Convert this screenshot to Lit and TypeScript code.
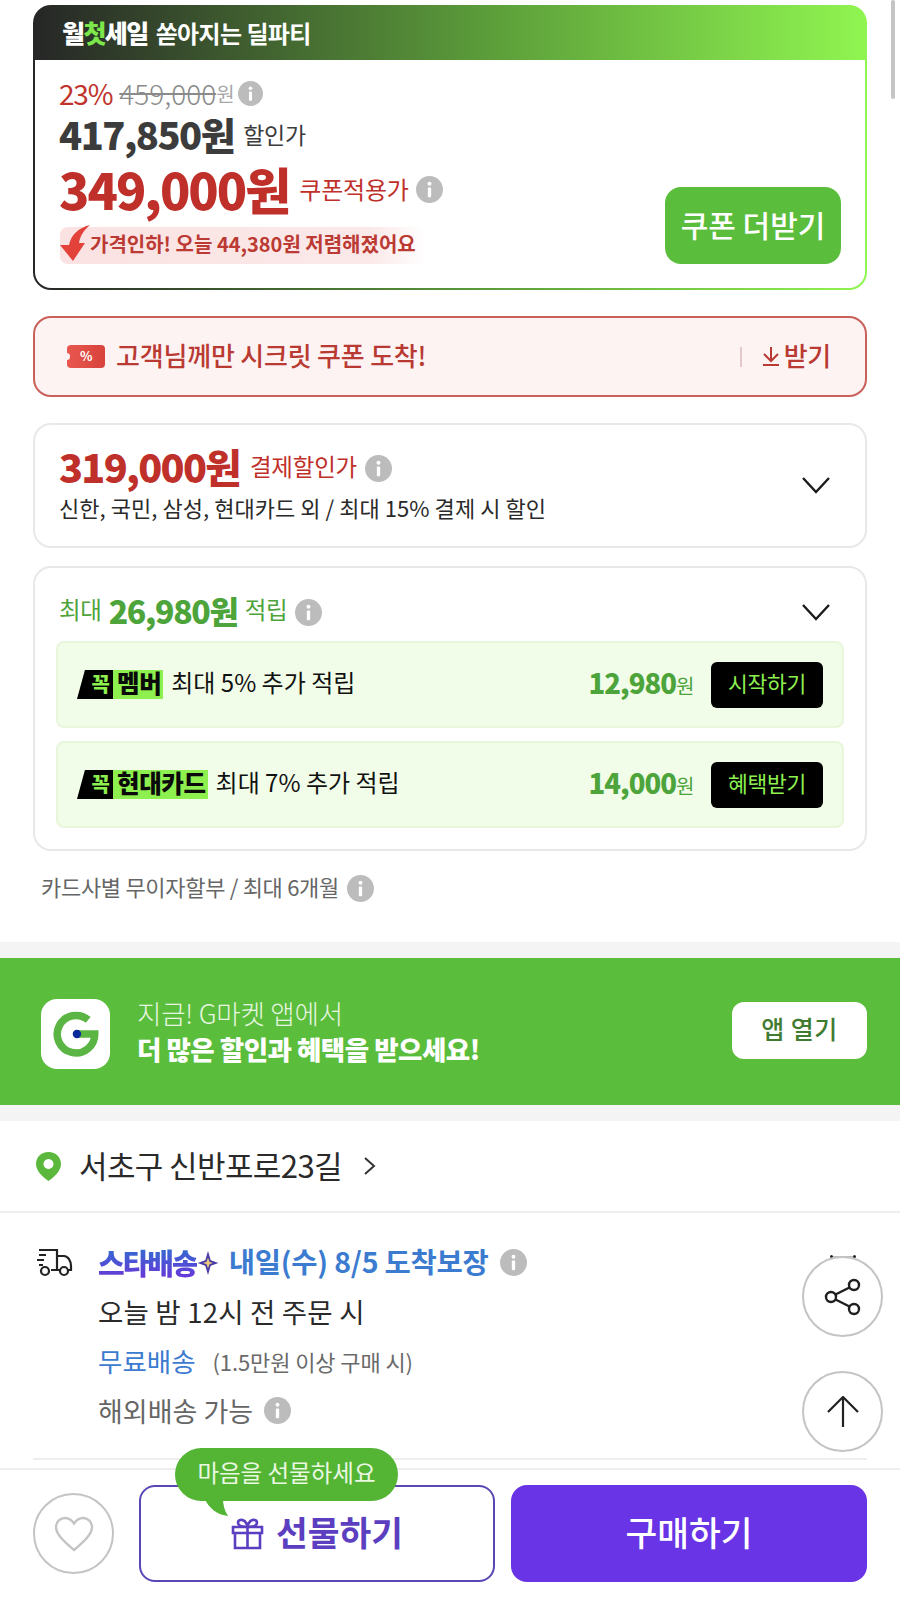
import { LitElement, html, css } from "lit";
import { customElement } from "lit/decorators.js";

const info = (s = 26) => html`<svg class="info" width=${s} height=${s} viewBox="0 0 26 26"><circle cx="13" cy="13" r="13" fill="#bcbcbc"/><circle cx="13" cy="7.5" r="1.9" fill="#fff"/><rect x="11.4" y="11" width="3.2" height="9.5" rx="1" fill="#fff"/></svg>`;
const chevron = html`<svg width="30" height="18" viewBox="0 0 30 18" fill="none" stroke="#1c1c1c" stroke-width="2.4"><path d="M2 2 L15 16 L28 2"/></svg>`;

@customElement("app-root")
export class AppRoot extends LitElement {
  static styles = css`
    :host { display: block; width: 900px; font-family: "Noto Sans CJK KR", "Noto Sans", sans-serif; color: #222; letter-spacing: -0.3px; }
    * { box-sizing: border-box; }
    svg { display: block; flex: none; }
    .page { position: relative; width: 900px; height: 1603px; background: #fff; padding-top: 5px; overflow: hidden; line-height: 1.15; }
    .scroll { position: absolute; right: 5px; top: 0; width: 4px; height: 99px; border-radius: 2px; background: #c4c4c4; }
    .sect { margin: 0 33px; }

    .deal { height: 285px; border-radius: 18px; padding: 0 2px 2px; background: linear-gradient(90deg, #262626 0%, #5c9e3a 55%, #90f550 100%); display: flex; flex-direction: column; }
    .deal-head { height: 55px; flex: none; display: flex; align-items: center; gap: 8px; padding-left: 27px; color: #fff; font-weight: 700; font-size: 24px; letter-spacing: -0.6px; }
    .deal-head b { font-size: 25px; font-weight: 900; letter-spacing: -1.6px; }
    .deal-head i { font-style: normal; color: #7ce64a; }
    .deal-body { flex: 1; background: #fff; border-radius: 0 0 16px 16px; padding: 16px 24px 24px 24px; display: flex; justify-content: space-between; align-items: flex-end; }
    .prices { display: flex; flex-direction: column; }
    .r1 { height: 34px; display: flex; align-items: center; font-size: 28px; color: #c0332b; letter-spacing: -1.2px; }
    .r1 s { color: #8a8a8a; font-size: 28px; margin-left: 7px; letter-spacing: 0; font-weight: 300; }
    .r1 span { color: #a8a8a8; font-size: 20px; }
    .r1 .info { margin-left: 5px; }
    .r2 { height: 48px; display: flex; align-items: center; color: #3c3c3c; }
    .r2 b { font-size: 38px; font-weight: 800; letter-spacing: -1.5px; }
    .r2 span { font-size: 23px; margin-left: 9px; letter-spacing: -0.2px; }
    .r3 { height: 62px; display: flex; align-items: center; color: #c0302a; }
    .r3 b { font-size: 50px; font-weight: 800; letter-spacing: -2px; }
    .r3 span { font-size: 24px; margin: 0 7px 0 10px; letter-spacing: -0.2px; }
    .drop { margin-top: 7px; height: 37px; width: 366px; display: flex; align-items: center; margin-left: 1px; background: linear-gradient(90deg, #fbe2e2 0%, #fbe9e9 85%, #fff 100%); border-radius: 8px; color: #bb3a33; font-size: 20px; font-weight: 700; letter-spacing: 0; }
    .drop svg { margin: -4px 0 0 0; }
    .drop span { padding-bottom: 4px; }
    .more { width: 176px; height: 77px; border-radius: 16px; background: #5bbd3c; color: #fff; font-size: 30px; font-weight: 500; display: flex; align-items: center; justify-content: center; letter-spacing: 0; padding-bottom: 3px; }

    .coupon { margin-top: 26px; height: 81px; border: 2px solid #c9605a; border-radius: 18px; background: #fdf3f3; display: flex; align-items: center; padding: 0 34px 0 32px; color: #b93a33; font-size: 26px; font-weight: 500; }
    .coupon .txt { margin-left: 11px; flex: 1; letter-spacing: -0.2px; padding-bottom: 4px; }
    .ticket { position: relative; width: 38px; height: 23px; flex: none; border-radius: 4px; background: linear-gradient(90deg, #e8574f, #d8433c); color: #fff; font-size: 13px; font-weight: 700; display: flex; align-items: center; justify-content: center; }
    .ticket::before { content: ""; position: absolute; left: -3px; top: 8px; width: 6px; height: 7px; border-radius: 50%; background: #fdf3f3; }
    .sep { width: 2px; height: 20px; background: #e0c9c8; margin-right: 20px; }
    .get { display: flex; align-items: center; gap: 4px; }
    .get span { padding-bottom: 4px; }

    .box { border: 2px solid #e8e8e8; border-radius: 18px; background: #fff; }
    .pay { margin-top: 26px; height: 125px; padding: 22px 34px 0 24px; position: relative; display: flex; justify-content: space-between; }
    .pay-l { display: flex; flex-direction: column; }
    .pay-top { display: flex; align-items: center; height: 42px; color: #c0302a; }
    .pay-top b { font-size: 39.5px; font-weight: 800; letter-spacing: -1.7px; padding-bottom: 4px; }
    .pay-top span { font-size: 23.5px; margin: 0 8px 0 10px; padding-bottom: 3px; letter-spacing: -0.2px; }
    .pay-sub { font-size: 22px; height: 34px; line-height: 32px; color: #2a2a2a; margin-top: 2px; letter-spacing: 0.05px; }
    .pay .chev, .rw-head .chev { align-self: center; }
    .pay .chev { margin-top: -24px; }

    .reward { margin-top: 18px; height: 285px; padding: 0 21px; }
    .rw-head { height: 73px; display: flex; align-items: center; padding: 15px 13px 0 3px; color: #4da43b; font-size: 23.5px; }
    .rw-head b { font-size: 32px; font-weight: 800; letter-spacing: -1.3px; margin: 0 7px; padding-bottom: 4px; }
    .rw-head span { padding-bottom: 4px; }
    .rw-head .info { margin-left: 8px; }
    .rw-head .chev { margin-left: auto; }
    .rw { height: 87px; border: 2px solid #e8f6dc; border-radius: 8px; background: #f1fde8; display: flex; align-items: flex-start; padding: 19px 19px 0 19px; }
    .rw + .rw { margin-top: 13px; }
    .badge { display: flex; height: 29px; margin-top: 8px; flex: none; }
    .badge .k { width: 36px; background: #000; clip-path: polygon(22% 0, 100% 0, 100% 100%, 0 100%); color: #8ef04f; font-size: 20px; font-weight: 900; display: flex; align-items: center; justify-content: flex-end; padding: 0 3px 2px 0; letter-spacing: 0; }
    .badge .n { background: #8ef04f; color: #0a0a0a; font-size: 24.5px; font-weight: 900; padding: 0 2px 2px 4px; display: flex; align-items: center; letter-spacing: -0.4px; }
    .rw-t { font-size: 24px; margin: 5px 0 0 8px; height: 30px; line-height: 30px; color: #111; letter-spacing: 0; }
    .amt { margin: 5px 17px 0 auto; height: 30px; line-height: 30px; color: #4da43b; font-size: 20px; }
    .amt b { font-size: 27.5px; font-weight: 800; letter-spacing: -1px; }
    .btn-k { width: 112px; height: 46px; border-radius: 6px; background: #000; color: #8ef04f; font-size: 21.5px; display: flex; align-items: center; justify-content: center; flex: none; padding-bottom: 3px; }
    .install { margin: 20px 33px 0 41px; height: 34px; display: flex; align-items: center; font-size: 22px; color: #666; gap: 8px; }
    .install span { padding-bottom: 2px; }

    .band { height: 16px; background: #f4f4f4; }
    .band.a { margin-top: 37px; }
    .app { height: 147px; background: #5bbd3c; display: flex; align-items: center; padding: 0 33px 0 41px; color: #fff; }
    .g { width: 69px; height: 70px; border-radius: 16px; background: #fff; margin-top: 4px; display: flex; align-items: center; justify-content: center; flex: none; }
    .app-t { margin-left: 27px; flex: 1; padding-bottom: 2px; }
    .app-t div { height: 36px; line-height: 36px; font-size: 26.5px; font-weight: 300; color: #e7f6e0; letter-spacing: -0.2px; }
    .app-t b { display: block; height: 36px; line-height: 36px; font-size: 26.5px; font-weight: 800; letter-spacing: -0.5px; }
    .open { width: 135px; height: 57px; border-radius: 12px; background: #fff; color: #3f7c31; font-size: 25px; font-weight: 500; display: flex; align-items: center; justify-content: center; margin-top: -3px; letter-spacing: 0.5px; padding-bottom: 3px; }

    .loc { height: 92px; border-bottom: 2px solid #eee; display: flex; align-items: center; padding-left: 36px; font-size: 31px; color: #2a2a2a; }
    .loc span { margin: 0 21px 0 18px; letter-spacing: -0.6px; padding-bottom: 2px; }

    .dlv { display: grid; grid-template-columns: 62px 1fr; grid-auto-rows: 49.3px; padding: 25px 33px 0 36px; height: 245px; }
    .dlv .truck { display: flex; align-items: center; }
    .dl { display: flex; align-items: center; grid-column: 2; }
    .dl.first { grid-column: auto; }
    .star { font-size: 29px; font-weight: 900; letter-spacing: -2px; color: transparent; background: linear-gradient(180deg, #2f6fd0, #6a35d8); -webkit-background-clip: text; background-clip: text; }
    .when { color: #3b7bd0; font-size: 28.5px; font-weight: 700; margin: 0 11px 0 10px; letter-spacing: -0.2px; padding-bottom: 2px; }
    .l2 { font-size: 27.5px; color: #2a2a2a; letter-spacing: 0.2px; }
    .free { font-size: 26.5px; color: #3b7bd0; letter-spacing: 0; }
    .note { font-size: 22px; color: #6a6a6a; margin-left: 17px; letter-spacing: -0.1px; }
    .abroad { font-size: 27px; color: #666; margin-right: 11px; letter-spacing: 0; }
    .divider { height: 2px; margin: 0 33px; background: #eee; }

    .bar { margin-top: 8px; border-top: 2px solid #eee; padding: 15px 33px 0; display: flex; align-items: center; }
    .heart { width: 81px; height: 81px; border: 2px solid #c4c4c4; border-radius: 50%; display: flex; align-items: center; justify-content: center; margin-right: 25px; flex: none; }
    .gift { position: relative; width: 356px; height: 97px; border: 2px solid #5b46b5; border-radius: 16px; display: flex; align-items: center; justify-content: center; gap: 12px; color: #5b3fc0; font-size: 34.5px; font-weight: 700; letter-spacing: 0; }
    .gift > span { padding-bottom: 3px; }
    .bubble { position: absolute; left: 34px; top: -39px; width: 223px; height: 53px; border-radius: 27px; background: #54b535; color: #eaf8e2; font-size: 23.5px; display: flex; align-items: center; justify-content: center; font-weight: 400; letter-spacing: 0; padding-bottom: 3px; }
    .tail { position: absolute; left: 28px; top: 50px; }
    .buy { width: 356px; height: 97px; margin-left: 16px; border-radius: 16px; background: #6933e6; color: #fff; font-size: 34.5px; font-weight: 500; display: flex; align-items: center; justify-content: center; letter-spacing: 0; padding-bottom: 3px; }
    .fab { position: absolute; left: 802px; width: 81px; height: 81px; border: 2px solid #c4c4c4; border-radius: 50%; background: #fff; display: flex; align-items: center; justify-content: center; }
    .fab.s { top: 1256px; }
    .fab.u { top: 1371px; }
    .peek { position: absolute; left: 830px; top: 1256px; width: 26px; height: 1px; background: #bbb; }
    .peek::before, .peek::after { content: ""; position: absolute; top: -1px; width: 3px; height: 3px; border-radius: 50%; background: #222; }
    .peek::before { left: 0; }
    .peek::after { right: 0; }
  `;

  row(name: string, text: string, amt: string, btn: string) {
    return html`<div class="rw">
      <div class="badge"><div class="k">꼭</div><div class="n">${name}</div></div>
      <div class="rw-t">${text}</div>
      <div class="amt"><b>${amt}</b>원</div>
      <div class="btn-k">${btn}</div>
    </div>`;
  }

  render() {
    return html`<div class="page">
      <div class="sect deal">
        <div class="deal-head"><b>월<i>첫</i>세일</b><span>쏟아지는 딜파티</span></div>
        <div class="deal-body">
          <div class="prices">
            <div class="r1">23%<s>459,000</s><span>원</span>${info(25)}</div>
            <div class="r2"><b>417,850원</b><span>할인가</span></div>
            <div class="r3"><b>349,000원</b><span>쿠폰적용가</span>${info(27)}</div>
            <div class="drop">
              <svg width="30" height="37" viewBox="0 0 30 37"><path d="M30 0 C18 3 11 10 9 20 H0 L13 36 L25 18 H19 C20 11 24 5 30 0Z" fill="#e2423a"/></svg>
              <span>가격인하! 오늘 44,380원 저렴해졌어요</span>
            </div>
          </div>
          <div class="more">쿠폰 더받기</div>
        </div>
      </div>

      <div class="sect coupon">
        <div class="ticket">%</div>
        <div class="txt">고객님께만 시크릿 쿠폰 도착!</div>
        <div class="sep"></div>
        <div class="get">
          <svg width="18" height="20" viewBox="0 0 18 20" fill="none" stroke="#b93a33" stroke-width="2"><path d="M9 1 V14 M2 8 L9 15 L16 8 M1 19 H17"/></svg>
          <span>받기</span>
        </div>
      </div>

      <div class="sect box pay">
        <div class="pay-l">
          <div class="pay-top"><b>319,000원</b><span>결제할인가</span>${info(27)}</div>
          <div class="pay-sub">신한, 국민, 삼성, 현대카드 외 / 최대 15% 결제 시 할인</div>
        </div>
        <div class="chev">${chevron}</div>
      </div>

      <div class="sect box reward">
        <div class="rw-head"><span>최대</span><b>26,980원</b><span>적립</span>${info(27)}<div class="chev">${chevron}</div></div>
        ${this.row("멤버", "최대 5% 추가 적립", "12,980", "시작하기")}
        ${this.row("현대카드", "최대 7% 추가 적립", "14,000", "혜택받기")}
      </div>

      <div class="install"><span>카드사별 무이자할부 / 최대 6개월</span>${info(27)}</div>

      <div class="band a"></div>
      <div class="app">
        <div class="g"><svg width="60" height="60" viewBox="2 2 64 64" fill="none"><path d="M47 19 A20 20 0 1 0 54 34 H36" stroke="#5bb544" stroke-width="8"/><circle cx="35" cy="34" r="4.500" fill="#0b2a9c"/></svg></div>
        <div class="app-t"><div>지금! G마켓 앱에서</div><b>더 많은 할인과 혜택을 받으세요!</b></div>
        <div class="open">앱 열기</div>
      </div>
      <div class="band"></div>

      <div class="loc">
        <svg width="25" height="29" viewBox="0 0 25 29"><path fill-rule="evenodd" d="M12.5 0 C5 0 0 5.500 0 12 C0 19 7 25 12.500 29 C18 25 25 19 25 12 C25 5.500 20 0 12.500 0Z M12.500 7 A5 5 0 1 1 12.499 7Z" fill="#5bb83c"/></svg>
        <span>서초구 신반포로23길</span>
        <svg width="14" height="20" viewBox="0 0 14 20" fill="none" stroke="#333" stroke-width="2"><path d="M2 2 L11 10 L2 18"/></svg>
      </div>

      <div class="dlv">
        <div class="truck"><svg width="37" height="30" viewBox="0 0 37 30" fill="none" stroke="#222" stroke-width="2.200"><path d="M3 2 H21 V22 H15 M3 7 H10 M1 12 H8 M3 17 H7"/><path d="M21 8 H28 C32 8 35 13 35 18 V22 H32 M24 22 H21"/><circle cx="9" cy="23" r="4"/><circle cx="28" cy="23" r="4"/></svg></div>
        <div class="dl first">
          <span class="star">스타배송</span>
          <svg width="22" height="24" viewBox="0 0 19 22"><path d="M9.500 0 L12 8.500 L19 11 L12 13.500 L9.500 22 L7 13.500 L0 11 L7 8.500Z" fill="#4a3aa8"/><path d="M9.500 6 L10.800 9.800 L14 11 L10.800 12.200 L9.500 16 L8.200 12.200 L5 11 L8.200 9.800Z" fill="#e8c77a"/></svg>
          <span class="when">내일(수) 8/5 도착보장</span>${info(27)}
        </div>
        <div class="dl l2">오늘 밤 12시 전 주문 시</div>
        <div class="dl"><span class="free">무료배송</span><span class="note">(1.5만원 이상 구매 시)</span></div>
        <div class="dl"><span class="abroad">해외배송 가능</span>${info(27)}</div>
      </div>
      <div class="divider"></div>

      <div class="bar">
        <div class="heart"><svg width="40" height="36" viewBox="0 0 40 36" fill="none" stroke="#c4c4c4" stroke-width="2.400"><path d="M20 34 C12 27 2 19 2 11 C2 5.500 6.500 2 11 2 C15 2 18 4.500 20 7.500 C22 4.500 25 2 29 2 C33.500 2 38 5.500 38 11 C38 19 28 27 20 34Z"/></svg></div>
        <div class="gift">
          <div class="bubble">마음을 선물하세요
            <svg class="tail" width="26" height="20" viewBox="0 0 26 20"><path d="M1 0 C6 10 14 17 25 18 C21 12 20 6 20 0Z" fill="#54b535"/></svg>
          </div>
          <svg width="33" height="32" viewBox="0 0 33 32" fill="none" stroke="#5b3fc0" stroke-width="2.600"><path d="M2 9 H31 V15 H2Z M4 15 V30 H29 V15 M16.500 9 V30"/><path d="M16.500 9 C10 9 7 7 7 4.500 C7 2 11 0.800 13.500 3 C15.500 5 16.500 7 16.500 9 C16.500 7 17.500 5 19.500 3 C22 0.800 26 2 26 4.500 C26 7 23 9 16.500 9Z"/></svg>
          <span>선물하기</span>
        </div>
        <div class="buy">구매하기</div>
      </div>

      <div class="peek"></div>
      <div class="fab s"><svg width="38" height="38" viewBox="0 0 38 38" fill="none" stroke="#1f1f1f" stroke-width="2.400"><circle cx="30" cy="7" r="5"/><circle cx="7" cy="19" r="5"/><circle cx="30" cy="31" r="5"/><path d="M11.500 16.500 L25.500 9.500 M11.500 21.500 L25.500 28.500"/></svg></div>
      <div class="fab u"><svg width="32" height="32" viewBox="0 0 32 32" fill="none" stroke="#222" stroke-width="2.200"><path d="M16 1 V31 M1 16 L16 1 L31 16"/></svg></div>
      <div class="scroll"></div>
    </div>`;
  }
}
